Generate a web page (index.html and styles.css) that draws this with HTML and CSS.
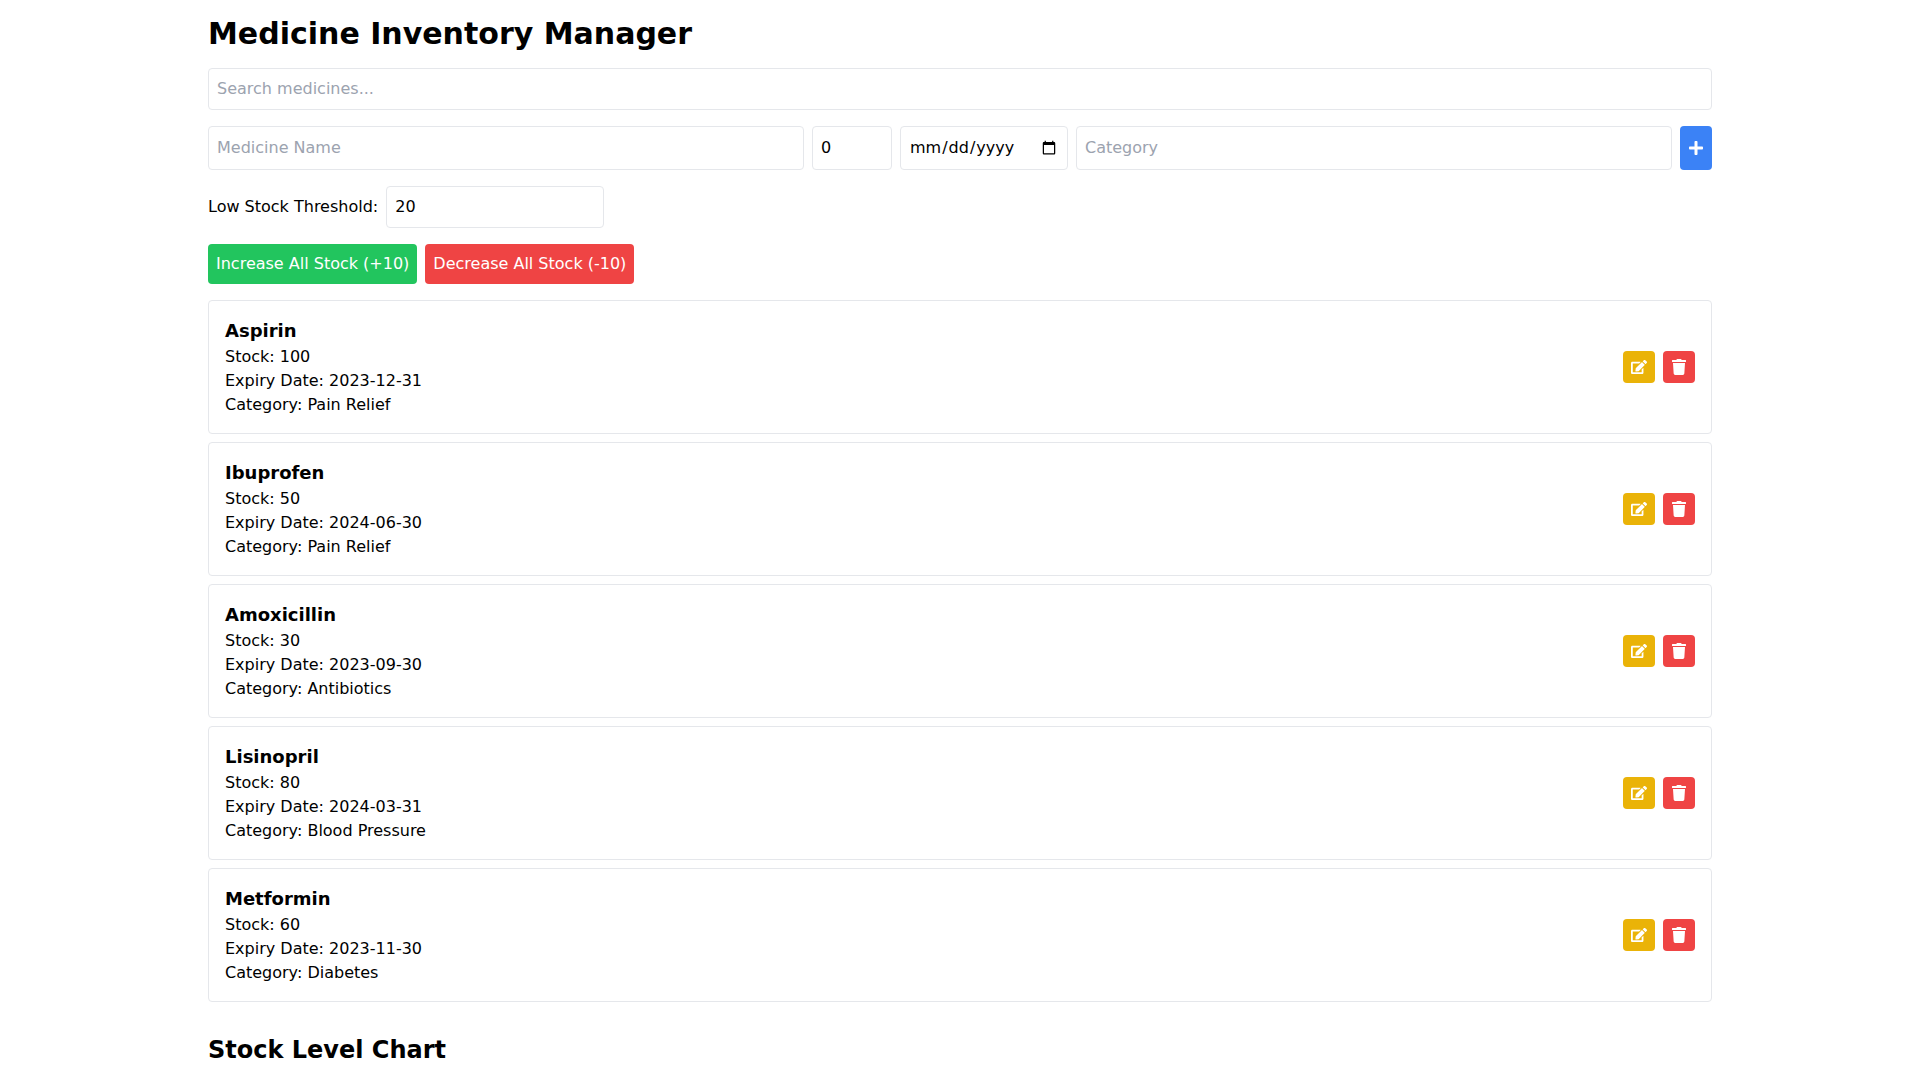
FILE: index.html
```html
<!DOCTYPE html>
<html lang="en">
<head>
<meta charset="utf-8">
<title>Medicine Inventory Manager</title>
<link rel="stylesheet" href="styles.css">
</head>
<body>
<main class="container">
  <h1 class="title">Medicine Inventory Manager</h1>
  <input class="field search" type="text" placeholder="Search medicines...">
  <div class="add-row">
    <input class="field grow" type="text" placeholder="Medicine Name">
    <input class="field stock" type="number" value="0">
    <input class="field" type="date">
    <input class="field grow" type="text" placeholder="Category">
    <button class="btn add" aria-label="Add"><svg class="icon" viewBox="0 0 448 512"><path d="M416 208H272V64c0-17.67-14.33-32-32-32h-32c-17.67 0-32 14.33-32 32v144H32c-17.67 0-32 14.33-32 32v32c0 17.67 14.33 32 32 32h144v144c0 17.67 14.33 32 32 32h32c17.67 0 32-14.33 32-32V304h144c17.67 0 32-14.33 32-32v-32c0-17.67-14.33-32-32-32z"/></svg></button>
  </div>
  <div class="threshold">
    <label class="threshold-label" for="thr">Low Stock Threshold:</label>
    <input id="thr" class="field" type="number" value="20">
  </div>
  <div class="bulk">
    <button class="btn green">Increase All Stock (+10)</button>
    <button class="btn red">Decrease All Stock (-10)</button>
  </div>
  <ul class="list">
    <li class="card">
      <div><div class="name">Aspirin</div><div>Stock: 100</div><div>Expiry Date: 2023-12-31</div><div>Category: Pain Relief</div></div>
      <div class="actions">
        <button class="btn square yellow" aria-label="Edit"><svg class="icon" viewBox="0 0 576 512"><path d="M402.6 83.2l90.2 90.2c3.8 3.8 3.8 10 0 13.8L274.4 405.6l-92.8 10.3c-12.4 1.4-22.9-9.1-21.5-21.5l10.3-92.8L388.8 83.2c3.8-3.8 10-3.8 13.8 0zm162-22.9l-48.8-48.8c-15.2-15.2-39.9-15.2-55.2 0l-35.4 35.4c-3.8 3.8-3.8 10 0 13.8l90.2 90.2c3.8 3.8 10 3.8 13.8 0l35.4-35.4c15.2-15.3 15.2-40 0-55.2zM384 346.2V448H64V128h229.8c3.2 0 6.2-1.3 8.5-3.5l40-40c7.6-7.6 2.2-20.5-8.5-20.5H48C21.5 64 0 85.5 0 112v352c0 26.5 21.5 48 48 48h352c26.5 0 48-21.5 48-48V306.2c0-10.7-12.9-16-20.5-8.5l-40 40c-2.2 2.3-3.5 5.3-3.5 8.5z"/></svg></button>
        <button class="btn square red" aria-label="Delete"><svg class="icon" viewBox="0 0 448 512"><path d="M432 32H312l-9.4-18.7A24 24 0 0 0 281.1 0H166.8a23.72 23.72 0 0 0-21.4 13.3L136 32H16A16 16 0 0 0 0 48v32a16 16 0 0 0 16 16h416a16 16 0 0 0 16-16V48a16 16 0 0 0-16-16zM53.2 467a48 48 0 0 0 47.9 45h245.8a48 48 0 0 0 47.9-45L416 128H32z"/></svg></button>
      </div>
    </li>
    <li class="card">
      <div><div class="name">Ibuprofen</div><div>Stock: 50</div><div>Expiry Date: 2024-06-30</div><div>Category: Pain Relief</div></div>
      <div class="actions">
        <button class="btn square yellow" aria-label="Edit"><svg class="icon" viewBox="0 0 576 512"><path d="M402.6 83.2l90.2 90.2c3.8 3.8 3.8 10 0 13.8L274.4 405.6l-92.8 10.3c-12.4 1.4-22.9-9.1-21.5-21.5l10.3-92.8L388.8 83.2c3.8-3.8 10-3.8 13.8 0zm162-22.9l-48.8-48.8c-15.2-15.2-39.9-15.2-55.2 0l-35.4 35.4c-3.8 3.8-3.8 10 0 13.8l90.2 90.2c3.8 3.8 10 3.8 13.8 0l35.4-35.4c15.2-15.3 15.2-40 0-55.2zM384 346.2V448H64V128h229.8c3.2 0 6.2-1.3 8.5-3.5l40-40c7.6-7.6 2.2-20.5-8.5-20.5H48C21.5 64 0 85.5 0 112v352c0 26.5 21.5 48 48 48h352c26.5 0 48-21.5 48-48V306.2c0-10.7-12.9-16-20.5-8.5l-40 40c-2.2 2.3-3.5 5.3-3.5 8.5z"/></svg></button>
        <button class="btn square red" aria-label="Delete"><svg class="icon" viewBox="0 0 448 512"><path d="M432 32H312l-9.4-18.7A24 24 0 0 0 281.1 0H166.8a23.72 23.72 0 0 0-21.4 13.3L136 32H16A16 16 0 0 0 0 48v32a16 16 0 0 0 16 16h416a16 16 0 0 0 16-16V48a16 16 0 0 0-16-16zM53.2 467a48 48 0 0 0 47.9 45h245.8a48 48 0 0 0 47.9-45L416 128H32z"/></svg></button>
      </div>
    </li>
    <li class="card">
      <div><div class="name">Amoxicillin</div><div>Stock: 30</div><div>Expiry Date: 2023-09-30</div><div>Category: Antibiotics</div></div>
      <div class="actions">
        <button class="btn square yellow" aria-label="Edit"><svg class="icon" viewBox="0 0 576 512"><path d="M402.6 83.2l90.2 90.2c3.8 3.8 3.8 10 0 13.8L274.4 405.6l-92.8 10.3c-12.4 1.4-22.9-9.1-21.5-21.5l10.3-92.8L388.8 83.2c3.8-3.8 10-3.8 13.8 0zm162-22.9l-48.8-48.8c-15.2-15.2-39.9-15.2-55.2 0l-35.4 35.4c-3.8 3.8-3.8 10 0 13.8l90.2 90.2c3.8 3.8 10 3.8 13.8 0l35.4-35.4c15.2-15.3 15.2-40 0-55.2zM384 346.2V448H64V128h229.8c3.2 0 6.2-1.3 8.5-3.5l40-40c7.6-7.6 2.2-20.5-8.5-20.5H48C21.5 64 0 85.5 0 112v352c0 26.5 21.5 48 48 48h352c26.5 0 48-21.5 48-48V306.2c0-10.7-12.9-16-20.5-8.5l-40 40c-2.2 2.3-3.5 5.3-3.5 8.5z"/></svg></button>
        <button class="btn square red" aria-label="Delete"><svg class="icon" viewBox="0 0 448 512"><path d="M432 32H312l-9.4-18.7A24 24 0 0 0 281.1 0H166.8a23.72 23.72 0 0 0-21.4 13.3L136 32H16A16 16 0 0 0 0 48v32a16 16 0 0 0 16 16h416a16 16 0 0 0 16-16V48a16 16 0 0 0-16-16zM53.2 467a48 48 0 0 0 47.9 45h245.8a48 48 0 0 0 47.9-45L416 128H32z"/></svg></button>
      </div>
    </li>
    <li class="card">
      <div><div class="name">Lisinopril</div><div>Stock: 80</div><div>Expiry Date: 2024-03-31</div><div>Category: Blood Pressure</div></div>
      <div class="actions">
        <button class="btn square yellow" aria-label="Edit"><svg class="icon" viewBox="0 0 576 512"><path d="M402.6 83.2l90.2 90.2c3.8 3.8 3.8 10 0 13.8L274.4 405.6l-92.8 10.3c-12.4 1.4-22.9-9.1-21.5-21.5l10.3-92.8L388.8 83.2c3.8-3.8 10-3.8 13.8 0zm162-22.9l-48.8-48.8c-15.2-15.2-39.9-15.2-55.2 0l-35.4 35.4c-3.8 3.8-3.8 10 0 13.8l90.2 90.2c3.8 3.8 10 3.8 13.8 0l35.4-35.4c15.2-15.3 15.2-40 0-55.2zM384 346.2V448H64V128h229.8c3.2 0 6.2-1.3 8.5-3.5l40-40c7.6-7.6 2.2-20.5-8.5-20.5H48C21.5 64 0 85.5 0 112v352c0 26.5 21.5 48 48 48h352c26.5 0 48-21.5 48-48V306.2c0-10.7-12.9-16-20.5-8.5l-40 40c-2.2 2.3-3.5 5.3-3.5 8.5z"/></svg></button>
        <button class="btn square red" aria-label="Delete"><svg class="icon" viewBox="0 0 448 512"><path d="M432 32H312l-9.4-18.7A24 24 0 0 0 281.1 0H166.8a23.72 23.72 0 0 0-21.4 13.3L136 32H16A16 16 0 0 0 0 48v32a16 16 0 0 0 16 16h416a16 16 0 0 0 16-16V48a16 16 0 0 0-16-16zM53.2 467a48 48 0 0 0 47.9 45h245.8a48 48 0 0 0 47.9-45L416 128H32z"/></svg></button>
      </div>
    </li>
    <li class="card">
      <div><div class="name">Metformin</div><div>Stock: 60</div><div>Expiry Date: 2023-11-30</div><div>Category: Diabetes</div></div>
      <div class="actions">
        <button class="btn square yellow" aria-label="Edit"><svg class="icon" viewBox="0 0 576 512"><path d="M402.6 83.2l90.2 90.2c3.8 3.8 3.8 10 0 13.8L274.4 405.6l-92.8 10.3c-12.4 1.4-22.9-9.1-21.5-21.5l10.3-92.8L388.8 83.2c3.8-3.8 10-3.8 13.8 0zm162-22.9l-48.8-48.8c-15.2-15.2-39.9-15.2-55.2 0l-35.4 35.4c-3.8 3.8-3.8 10 0 13.8l90.2 90.2c3.8 3.8 10 3.8 13.8 0l35.4-35.4c15.2-15.3 15.2-40 0-55.2zM384 346.2V448H64V128h229.8c3.2 0 6.2-1.3 8.5-3.5l40-40c7.6-7.6 2.2-20.5-8.5-20.5H48C21.5 64 0 85.5 0 112v352c0 26.5 21.5 48 48 48h352c26.5 0 48-21.5 48-48V306.2c0-10.7-12.9-16-20.5-8.5l-40 40c-2.2 2.3-3.5 5.3-3.5 8.5z"/></svg></button>
        <button class="btn square red" aria-label="Delete"><svg class="icon" viewBox="0 0 448 512"><path d="M432 32H312l-9.4-18.7A24 24 0 0 0 281.1 0H166.8a23.72 23.72 0 0 0-21.4 13.3L136 32H16A16 16 0 0 0 0 48v32a16 16 0 0 0 16 16h416a16 16 0 0 0 16-16V48a16 16 0 0 0-16-16zM53.2 467a48 48 0 0 0 47.9 45h245.8a48 48 0 0 0 47.9-45L416 128H32z"/></svg></button>
      </div>
    </li>
  </ul>
  <h2 class="subtitle">Stock Level Chart</h2>
</main>
</body>
</html>
```
FILE: styles.css
```css
* { box-sizing: border-box; }
html { scrollbar-width: none; }
body {
  margin: 0;
  background: #fff;
  color: #000;
  font-family: "DejaVu Sans", sans-serif;
  font-size: 16px;
  line-height: 24px;
}
.container { width: 1536px; margin: 0 auto; padding: 16px; }
.title { margin: 0 0 16px; font-size: 30px; line-height: 36px; font-weight: 700; }
.field {
  border: 1px solid #e5e7eb;
  border-radius: 4px;
  padding: 8px;
  font: inherit;
  color: #000;
  background: #fff;
  outline: none;
}
.field::placeholder { color: #9ca3af; opacity: 1; }
.search { display: block; width: 100%; margin-bottom: 16px; }
.add-row { display: flex; gap: 8px; margin-bottom: 16px; }
.grow { flex: 1 1 0; min-width: 0; }
.stock { width: 80px; }
.btn {
  border: 0;
  border-radius: 4px;
  padding: 8px;
  font: inherit;
  color: #fff;
  display: inline-flex;
  align-items: center;
  justify-content: center;
}
.icon { width: 16px; height: 16px; fill: currentColor; display: block; flex: none; }
.add { background: #3b82f6; width: 32px; }
.threshold { display: flex; align-items: center; gap: 8px; margin-bottom: 16px; }
.bulk { display: flex; gap: 8px; margin-bottom: 16px; }
.green { background: #22c55e; }
.red { background: #ef4444; }
.yellow { background: #eab308; }
.list { list-style: none; margin: 0; padding: 0; }
.card {
  display: flex;
  justify-content: space-between;
  align-items: center;
  border: 1px solid #e5e7eb;
  border-radius: 4px;
  padding: 16px;
  margin-bottom: 8px;
}
.name { font-size: 18px; line-height: 28px; font-weight: 700; }
.actions { display: flex; gap: 8px; }
.square { width: 32px; height: 32px; }
.subtitle { margin: 32px 0 8px; font-size: 24px; line-height: 32px; font-weight: 700; }
```
